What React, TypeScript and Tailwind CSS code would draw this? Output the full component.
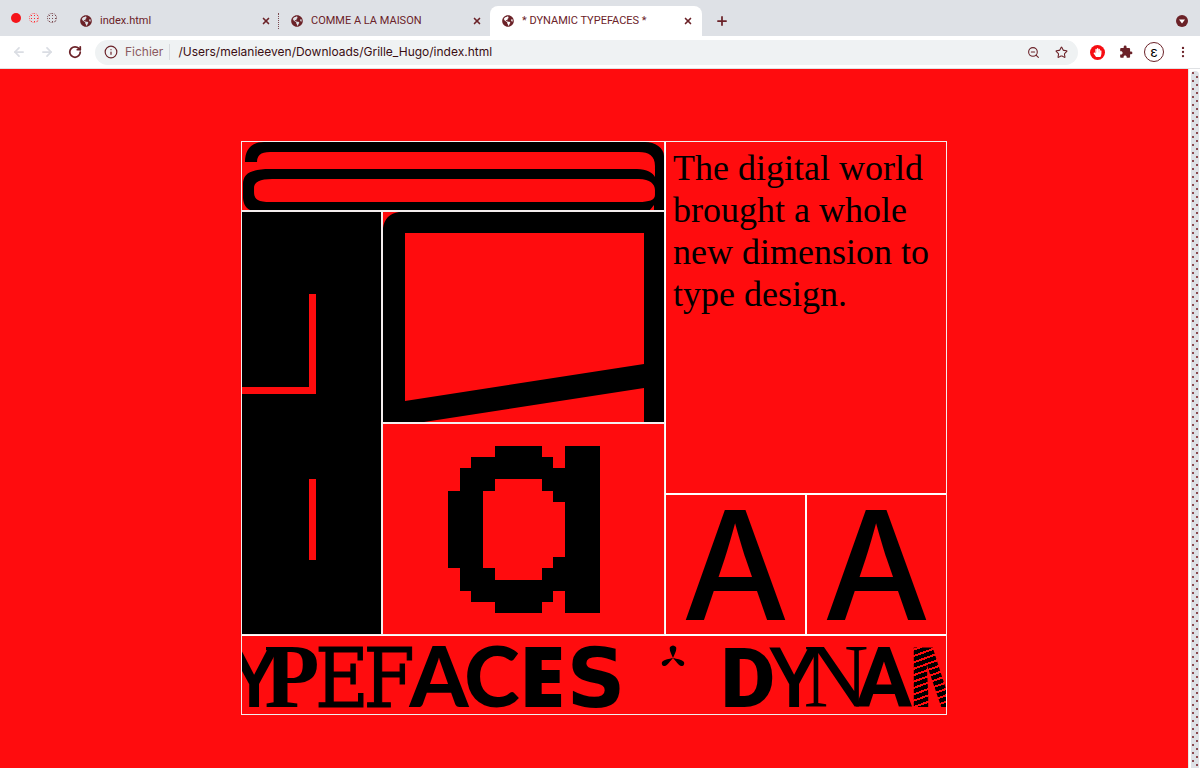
import { X, Plus, RotateCw, Info, ZoomOut, Star, MoreVertical, ArrowLeft, ArrowRight } from "lucide-react";
import { MdExtension } from "react-icons/md";
import { FaGlobeAmericas, FaHandPaper } from "react-icons/fa";

const tabs = [
  { title: "index.html", active: false, divider: true },
  { title: "COMME A LA MAISON", active: false, divider: false },
  { title: "* DYNAMIC TYPEFACES *", active: true, divider: false },
];

const pixelRows = [
  "....####..###",
  "..#######.###",
  ".############",
  ".###....#####",
  "###......####",
  "###.......###",
  "###.......###",
  "###.......###",
  "###.......###",
  "###.......###",
  "###......####",
  ".###....#####",
  ".############",
  "..#######.###",
  "....####..###",
];

function TabStrip() {
  return (
    <div className="flex h-9 items-end bg-[#dee1e6]">
      <div className="flex w-[68px] shrink-0 gap-2 self-center pl-[11px]">
        <span className="size-[10px] rounded-full bg-[#f5141a]" />
        <span className="size-[10px] rounded-full border border-dotted border-[#ff5a5e] bg-[radial-gradient(circle,#ff2a2e_1px,transparent_1px)] bg-size-[3px_3px]" />
        <span className="size-[10px] rounded-full border border-dotted border-[#7a4a50] bg-[radial-gradient(circle,#7a4a50_1px,transparent_1px)] bg-size-[3px_3px]" />
      </div>
      <div role="tablist" className="flex min-w-0 items-center">
        {tabs.map((tab) => (
          <div
            key={tab.title}
            className={
              tab.active
                ? "flex h-[30px] w-[212px] items-center gap-2 rounded-t-lg bg-white pl-3 pr-[9px]"
                : "flex h-[30px] w-[211px] items-center gap-2 pl-3"
            }
          >
            <FaGlobeAmericas className="size-3 shrink-0" />
            <button
              role="tab"
              aria-selected={tab.active}
              className="min-w-0 flex-1 truncate text-left font-['Roboto',sans-serif] text-[11px]"
            >
              {tab.title}
            </button>
            <button aria-label={"Close " + tab.title}>
              <X className="size-[10px]" strokeWidth={4} />
            </button>
            {!tab.active && (
              <span className={tab.divider ? "-ml-px h-4 border-r border-dotted border-[#7a4a50]" : "-ml-px h-4 w-px"} />
            )}
          </div>
        ))}
      </div>
      <button aria-label="New tab" className="flex h-[30px] w-10 items-center justify-center">
        <Plus className="size-[14px]" strokeWidth={3} />
      </button>
      <button aria-label="Search tabs" className="mr-3 ml-auto flex h-[30px] items-center">
        <svg viewBox="0 0 12 12" className="size-3">
          <circle cx="6" cy="6" r="6" fill="currentColor" />
          <path d="M3 4.5h6L6 8.5z" fill="#fff" />
        </svg>
      </button>
    </div>
  );
}

function Toolbar() {
  return (
    <div className="flex h-[33px] items-center border-b border-[#dfe1e4] bg-white">
      <div className="flex w-[95px] shrink-0 items-center gap-[14px] pl-3">
        <button aria-label="Back" className="text-[#dadde3]">
          <ArrowLeft className="size-[14px]" strokeWidth={3} />
        </button>
        <button aria-label="Forward" className="text-[#dadde3]">
          <ArrowRight className="size-[14px]" strokeWidth={3} />
        </button>
        <button aria-label="Reload">
          <RotateCw className="size-[14px]" strokeWidth={3} />
        </button>
      </div>
      <div className="flex h-[25px] min-w-0 flex-1 items-center rounded-full bg-[#eff2f3] pr-[10px] pl-[9px]">
        <Info className="size-[14px] shrink-0" strokeWidth={2} />
        <span className="ml-[7px] text-[12px] text-[#8b5a60]">Fichier</span>
        <span className="mr-2 ml-[6px] h-4 w-px bg-[#d8dadd]" />
        <input
          aria-label="Address"
          className="min-w-0 flex-1 bg-transparent text-[12px] text-[#3a0d12] outline-none"
          defaultValue="/Users/melanieeven/Downloads/Grille_Hugo/index.html"
        />
        <button aria-label="Zoom">
          <ZoomOut className="size-[13px]" strokeWidth={2} />
        </button>
        <button aria-label="Bookmark" className="ml-[15px]">
          <Star className="size-[13px]" strokeWidth={2} />
        </button>
      </div>
      <div className="flex shrink-0 items-center pr-[10px] pl-3">
        <button
          aria-label="Content blocker"
          className="flex size-[15px] items-center justify-center rounded-full bg-[#f60d12] text-white"
        >
          <FaHandPaper className="size-[9px]" />
        </button>
        <button aria-label="Extensions" className="ml-[14px]">
          <MdExtension className="size-[14px]" />
        </button>
        <button
          aria-label="Profile"
          className="ml-[11px] flex size-5 items-center justify-center rounded-full border border-[#6b2228] text-[14px] leading-none text-black"
        >
          ε
        </button>
        <button aria-label="Menu" className="ml-3">
          <MoreVertical className="size-[14px]" strokeWidth={2} />
        </button>
      </div>
    </div>
  );
}

function StretchedTile() {
  return (
    <svg viewBox="0 0 421 68" preserveAspectRatio="none" className="block size-full">
      <path
        fillRule="evenodd"
        d="M3 20C3 8 9 0 22 0H402C412 0 421 6 421 14V68H8C3 66 1 60 1 55V42C1 32 8 27 28 27H394C404 27 410 31 412 35V24C412 14 406 10 396 10H28C18 10 15 14 15 20ZM30 37H396C407 37 412 42 412 48V53C412 58 406 60 396 60H28C17 60 12 58 12 50V46C12 40 18 37 30 37ZM411 63V68H407Z"
      />
    </svg>
  );
}

function BlockTile() {
  return (
    <svg viewBox="0 0 139 422" preserveAspectRatio="none" shapeRendering="crispEdges" className="block size-full">
      <rect width="139" height="422" />
      <g fill="#ff0c0e">
        <rect x="67" y="82" width="7" height="100" />
        <rect x="0" y="175" width="74" height="7" />
        <rect x="67" y="267" width="7" height="81" />
      </g>
    </svg>
  );
}

function FrameTile() {
  return (
    <svg viewBox="0 0 281 210" preserveAspectRatio="none" className="block size-full">
      <path fillRule="evenodd" d="M0 16Q2 2 16 0H281V210H261V176L41 210H0ZM22 21H261V152L22 189Z" />
    </svg>
  );
}

function PixelTile() {
  return (
    <svg viewBox="0 0 13 15" preserveAspectRatio="none" shapeRendering="crispEdges" className="h-[167px] w-[152px]">
      {pixelRows.flatMap((row, y) =>
        Array.from(row).map((cell, x) => (cell === "#" ? <rect key={x + "-" + y} x={x} y={y} width="1" height="1" /> : null)),
      )}
    </svg>
  );
}

const slab = "font-['DejaVu_Serif_Condensed','DejaVu_Serif',serif] text-[82px] [-webkit-text-stroke:1px_black]";
const letters = [
  { char: "Y", style: "w-6 font-['Open_Sans',sans-serif] font-semibold text-[84px]" },
  { char: "P", style: "w-[52px] font-['Liberation_Serif',serif] font-bold text-[90px]" },
  { char: "E", style: "w-[48px] " + slab },
  { char: "F", style: "w-[46px] " + slab },
  { char: "A", style: "w-[54px] font-['Lato',sans-serif] font-black text-[84px]" },
  { char: "C", style: "w-[52px] font-['Lato',sans-serif] font-black text-[84px]" },
  { char: "E", style: "w-[48px] font-['Noto_Sans',sans-serif] font-black text-[84px]" },
  { char: "S", style: "w-[60px] font-['DejaVu_Sans',sans-serif] font-bold text-[82px]" },
  { char: "*", style: "w-[94px]" },
  { char: "D", style: "w-14 font-['Roboto',sans-serif] font-black text-[84px]" },
  { char: "Y", style: "w-9 font-['Open_Sans',sans-serif] font-semibold text-[84px]" },
  { char: "N", style: "w-12 font-['Liberation_Serif',serif] text-[90px]" },
  { char: "A", style: "w-12 font-['Roboto',sans-serif] font-bold text-[84px]" },
  {
    char: "M",
    style:
      "w-[76px] bg-[repeating-linear-gradient(160deg,#000_0_4px,transparent_4px_6px)] bg-clip-text text-transparent font-['Roboto',sans-serif] font-black text-[84px]",
  },
];

function Marquee() {
  return (
    <div className="flex h-full items-baseline overflow-hidden leading-[78px]">
      {letters.map((letter, i) =>
        letter.char === "*" ? (
          <span key={i} className={"flex shrink-0 justify-center self-start pt-[9px] " + letter.style}>
            <svg viewBox="0 0 24 22" className="h-[22px] w-6" role="img" aria-label="*">
              <path d="M12 13C10 8 8 5 9 2Q12-1 15 2C16 5 14 8 12 13C16 14 20 14 23 17Q24 21 20 21C17 20 15 16 12 13C9 16 7 20 4 21Q0 21 1 17C4 14 8 14 12 13Z" />
            </svg>
          </span>
        ) : (
          <span key={i} className={"flex shrink-0 justify-center " + letter.style}>
            {letter.char}
          </span>
        ),
      )}
    </div>
  );
}

export default function App() {
  return (
    <div className="flex h-screen min-h-[740px] flex-col font-['Inter','Liberation_Sans',sans-serif] text-[#6b2228]">
      <header>
        <TabStrip />
        <Toolbar />
      </header>
      <div className="flex min-h-0 flex-1">
        <main className="min-w-0 flex-1 bg-[#ff0c0e] pt-[72px] text-black">
          <div className="mx-auto grid w-full max-w-[706px] grid-cols-[140fr_283fr_141fr_140fr] grid-rows-[69px_212px_71px_141px_79px] border border-[#f4eeee]">
            <section className="col-span-2 border-r border-b border-[#f4eeee]">
              <StretchedTile />
            </section>
            <section className="col-span-2 row-span-3 border-b border-l border-white pt-[5px] pl-[7px]">
              <p className="font-['Liberation_Serif',serif] text-[36px] leading-[42px]">
                The digital world brought a whole new dimension to type design.
              </p>
            </section>
            <section className="row-span-3 border-t border-r border-b border-[#f4eeee]">
              <BlockTile />
            </section>
            <section className="border border-[#f4eeee]">
              <FrameTile />
            </section>
            <section className="row-span-2 flex items-center justify-center border border-[#f4eeee]">
              <PixelTile />
            </section>
            <section className="flex justify-center border border-white font-['Inter',sans-serif] text-[151px] leading-[141px] font-medium">
              A
            </section>
            <section className="flex justify-center border border-r-0 border-white font-['Inter',sans-serif] text-[151px] leading-[141px] font-medium">
              A
            </section>
            <section className="col-span-4 min-w-0 border-t border-white">
              <Marquee />
            </section>
          </div>
        </main>
        <div className="w-3 shrink-0 border-l border-[#e8e8e8] bg-white pt-[2px] pr-px pl-[2px]">
          <div className="h-full rounded-t-full bg-[#dee1e6] bg-[radial-gradient(circle_at_2px_2px,#8b4a50_1px,transparent_1px),radial-gradient(circle_at_6px_6px,#8b4a50_1px,transparent_1px)] bg-size-[8px_8px]" />
        </div>
      </div>
    </div>
  );
}
